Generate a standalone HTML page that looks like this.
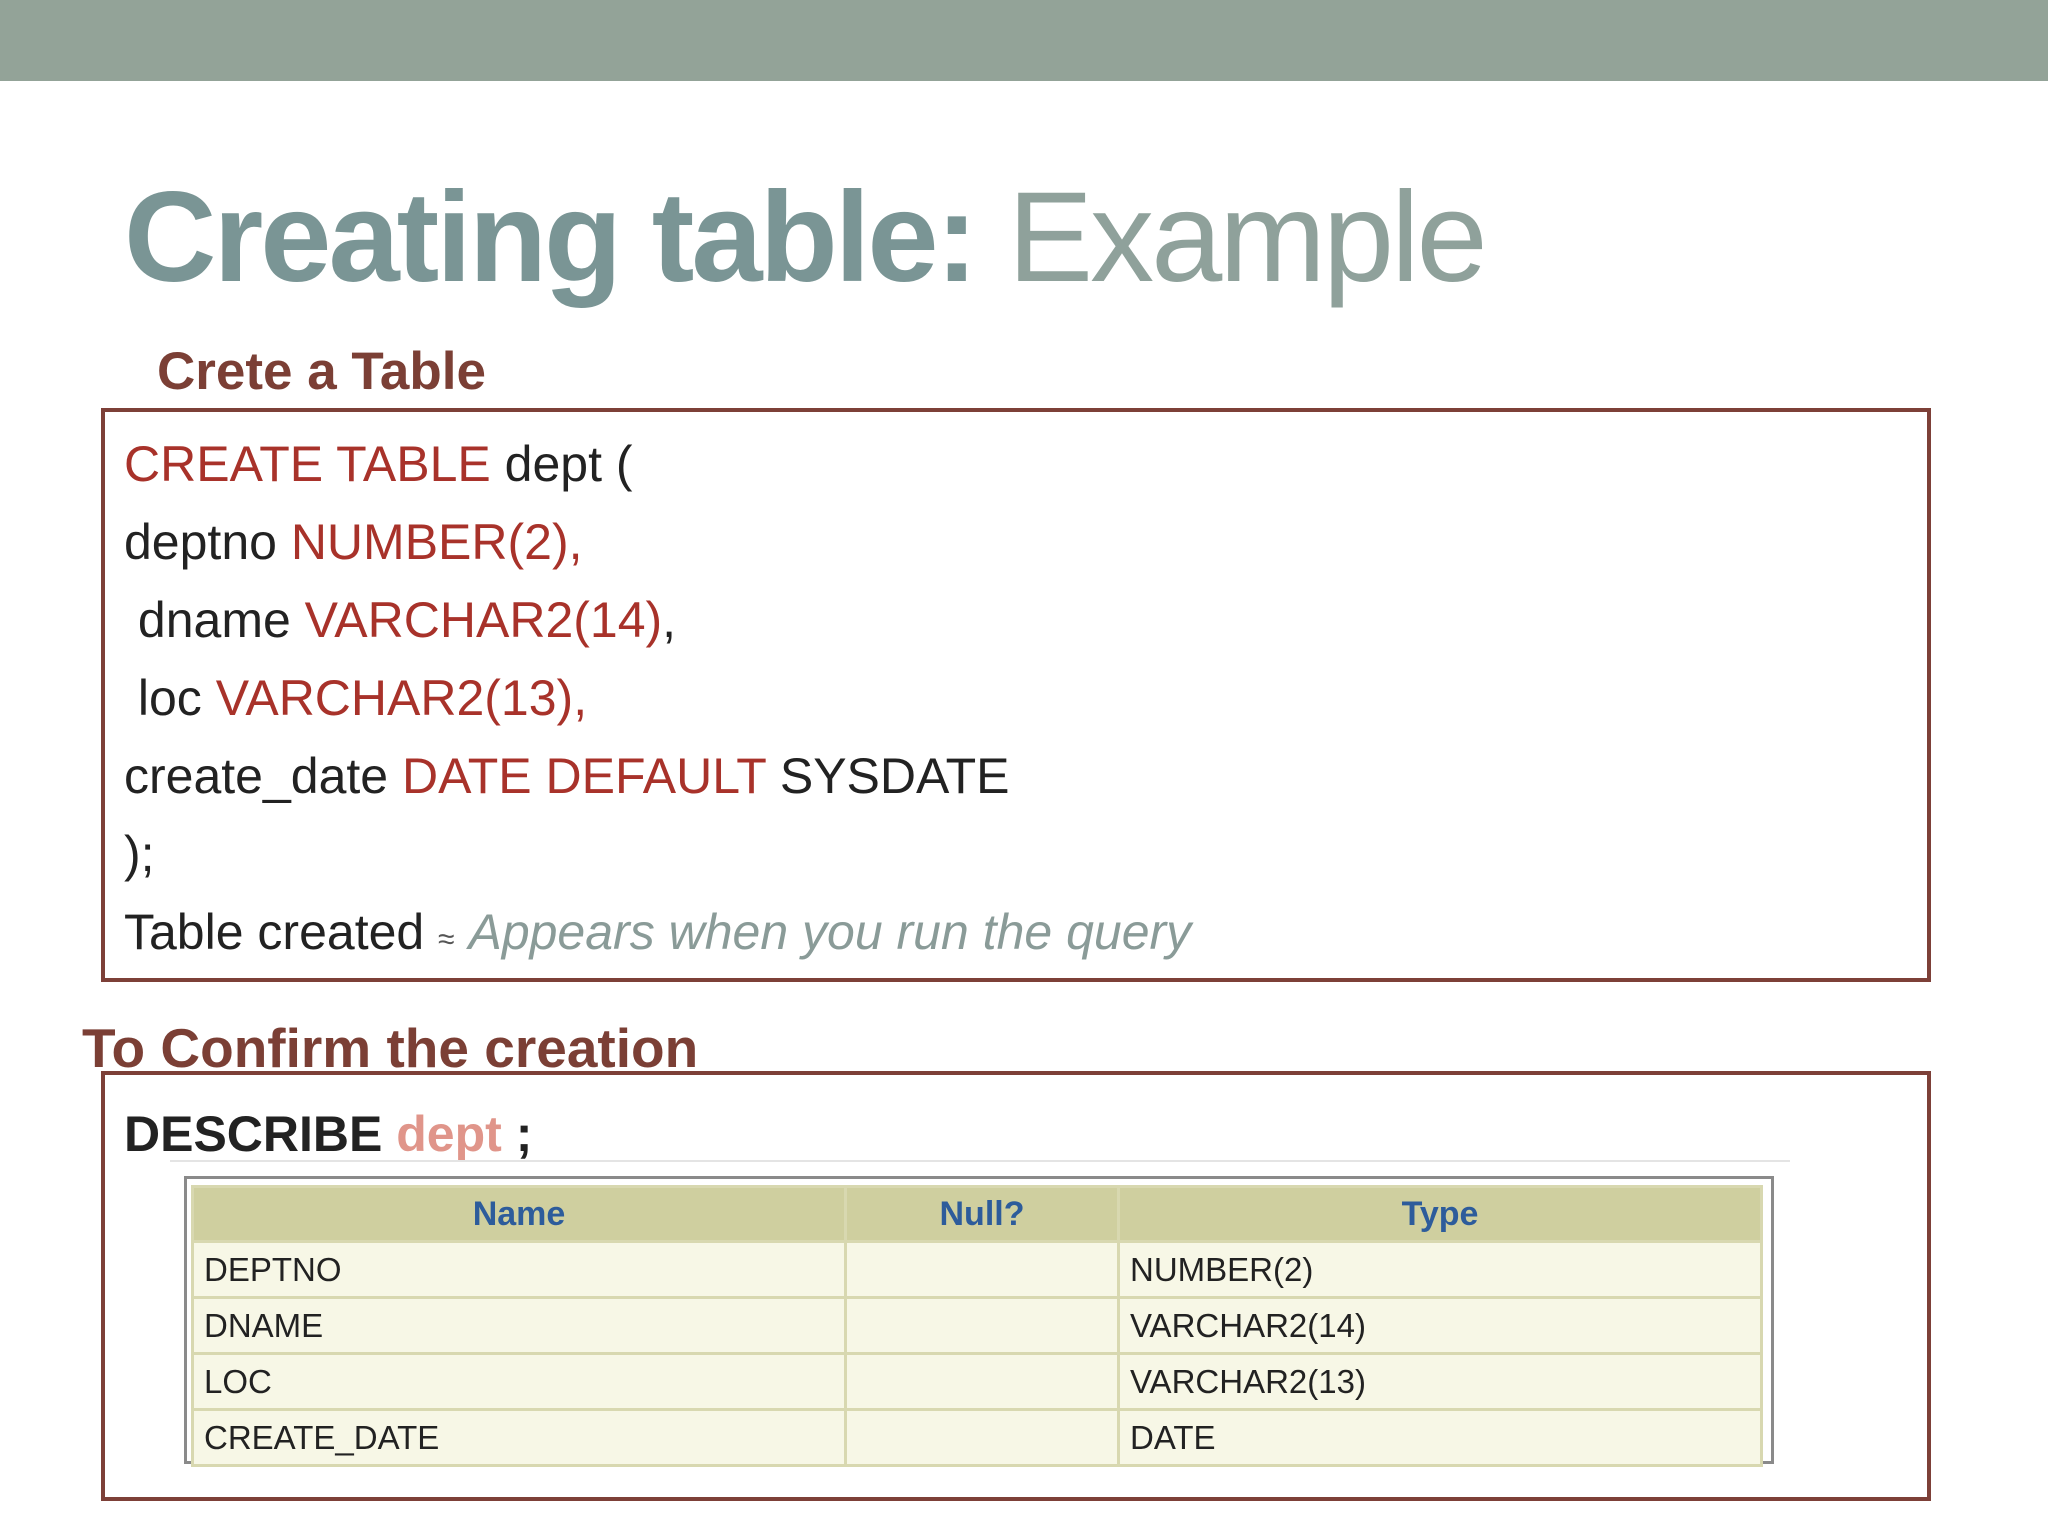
<!DOCTYPE html>
<html><head><meta charset="utf-8"><style>
body{margin:0;width:2048px;height:1536px;background:#fff;position:relative;overflow:hidden;font-family:"Liberation Sans",sans-serif}
.bar{position:absolute;left:0;top:0;width:2048px;height:81px;background:#93a398}
.t{position:absolute;white-space:nowrap}
.box{position:absolute;border:4px solid #7d4038;box-sizing:border-box}
.code{position:absolute;left:124px;font-size:50px;color:#222;white-space:nowrap;line-height:50px}
.r{color:#a8322a}
table{position:absolute;left:191px;top:1185px;width:1572px;border-collapse:collapse;font-size:33px}
td,th{border:3px solid #d8d8b0;padding:0 10px;height:53px;background:#f7f7e6;color:#222;text-align:left}
th{background:#cfcf9f;color:#2d5c9b;text-align:center;font-size:34px;height:52px;transform:none}
</style></head><body>
<div class="bar"></div>
<div class="t" style="left:124px;top:168px;font-size:128px;line-height:140px;color:#7a9595;letter-spacing:-3px"><b>Creating table:</b> <span style="color:#8fa19b">Example</span></div>
<div class="t" style="left:157px;top:342px;font-size:53px;line-height:60px;font-weight:bold;color:#7b3f35">Crete a Table</div>
<div class="box" style="left:101px;top:408px;width:1830px;height:574px"></div>
<div class="code" style="top:439px"><span class="r">CREATE TABLE</span> dept (</div>
<div class="code" style="top:517px">deptno <span class="r">NUMBER(2),</span></div>
<div class="code" style="top:595px">&nbsp;dname <span class="r">VARCHAR2(14)</span>,</div>
<div class="code" style="top:673px">&nbsp;loc <span class="r">VARCHAR2(13),</span></div>
<div class="code" style="top:751px">create_date <span class="r">DATE DEFAULT</span> SYSDATE</div>
<div class="code" style="top:829px">);</div>
<div class="code" style="top:907px">Table created <span style="font-size:30px;color:#555">&#8776;</span> <i style="color:#8a9b98">Appears when you run the query</i></div>
<div class="t" style="left:82px;top:1018px;font-size:55px;line-height:60px;font-weight:bold;color:#7b3f35">To Confirm the creation</div>
<div class="box" style="left:101px;top:1071px;width:1830px;height:430px"></div>
<div class="t" style="left:124px;top:1108px;font-size:50px;line-height:52px;font-weight:bold;color:#222">DESCRIBE <span style="color:#e0958a">dept</span> ;</div>
<div style="position:absolute;left:170px;top:1160px;width:1620px;height:2px;background:#e4e4e4"></div>
<div style="position:absolute;left:184px;top:1176px;width:1590px;height:288px;border:3px solid #8a8a8a;box-sizing:border-box"></div>
<table>
<tr><th style="width:630px">Name</th><th style="width:250px">Null?</th><th>Type</th></tr>
<tr><td>DEPTNO</td><td></td><td>NUMBER(2)</td></tr>
<tr><td>DNAME</td><td></td><td>VARCHAR2(14)</td></tr>
<tr><td>LOC</td><td></td><td>VARCHAR2(13)</td></tr>
<tr><td>CREATE_DATE</td><td></td><td>DATE</td></tr>
</table>
</body></html>
